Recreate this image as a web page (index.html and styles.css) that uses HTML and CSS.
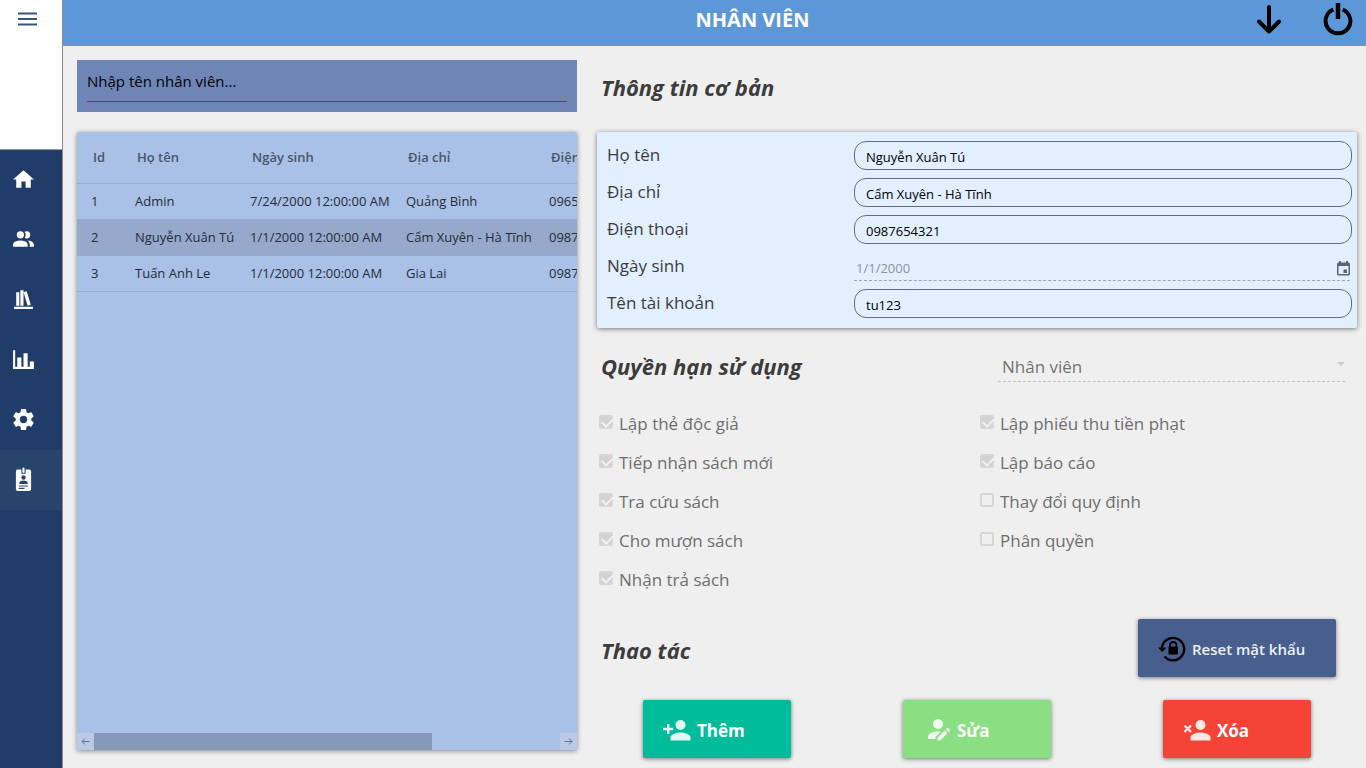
FILE: index.html
```html
<!DOCTYPE html>
<html lang="vi">
<head>
<meta charset="utf-8">
<meta name="viewport" content="width=device-width, initial-scale=1">
<title>Nhân viên</title>
<link rel="stylesheet" href="styles.css">
</head>
<body>
<div class="app">
  <aside class="sidebar">
    <div class="sidebar-top">
      <button class="icon-button menu-button" type="button" aria-label="Menu">
        <svg width="20" height="14" viewBox="0 0 20 14"><path d="M0 1.5h19M0 7h19M0 12.5h19" stroke="currentColor" stroke-width="2"/></svg>
      </button>
    </div>
    <nav class="nav">
      <a class="nav-item" href="#home" aria-label="Trang chủ"><svg class="nav-icon" viewBox="0 0 24 24"><path d="M10 20v-6h4v6h5v-8h3L12 3 2 12h3v8z"/></svg></a>
      <a class="nav-item" href="#readers" aria-label="Độc giả"><svg class="nav-icon" viewBox="0 0 24 24"><path d="M16 17V19H2V17S2 13 9 13 16 17 16 17M12.5 7.5A3.5 3.5 0 1 0 9 11A3.5 3.5 0 0 0 12.5 7.5M15.94 13A5.32 5.32 0 0 1 18 17V19H22V17S22 13.37 15.94 13M15 4A3.39 3.39 0 0 0 13.07 4.59A5 5 0 0 1 13.07 10.41A3.39 3.39 0 0 0 15 11A3.5 3.5 0 0 0 15 4Z"/></svg></a>
      <a class="nav-item" href="#books" aria-label="Sách"><svg class="nav-icon" viewBox="0 0 24 24"><path d="M9 3V18H12V3H9M12 5L16 18L19 17L15 4L12 5M5 5V18H8V5H5M3 19V21H21V19H3Z"/></svg></a>
      <a class="nav-item" href="#reports" aria-label="Báo cáo"><svg class="nav-icon" viewBox="0 0 24 24"><path d="M22,21H2V3H4V19H6V10H10V19H12V6H16V19H18V14H22V21Z"/></svg></a>
      <a class="nav-item" href="#settings" aria-label="Cài đặt"><svg class="nav-icon" viewBox="0 0 24 24"><path d="M12,15.5A3.5,3.5 0 0,1 8.5,12A3.5,3.5 0 0,1 12,8.5A3.5,3.5 0 0,1 15.5,12A3.5,3.5 0 0,1 12,15.5M19.43,12.97C19.47,12.65 19.5,12.33 19.5,12C19.5,11.67 19.47,11.34 19.43,11L21.54,9.37C21.73,9.22 21.78,8.95 21.66,8.73L19.66,5.27C19.54,5.05 19.27,4.96 19.05,5.05L16.56,6.05C16.04,5.66 15.5,5.32 14.87,5.07L14.5,2.42C14.46,2.18 14.25,2 14,2H10C9.75,2 9.54,2.18 9.5,2.42L9.13,5.07C8.5,5.32 7.96,5.66 7.44,6.05L4.95,5.05C4.73,4.96 4.46,5.05 4.34,5.27L2.34,8.73C2.21,8.95 2.27,9.22 2.46,9.37L4.57,11C4.53,11.34 4.5,11.67 4.5,12C4.5,12.33 4.53,12.65 4.57,12.97L2.46,14.63C2.27,14.78 2.21,15.05 2.34,15.27L4.34,18.73C4.46,18.95 4.73,19.03 4.95,18.95L7.44,17.94C7.96,18.34 8.5,18.68 9.13,18.93L9.5,21.58C9.54,21.82 9.75,22 10,22H14C14.25,22 14.46,21.82 14.5,21.58L14.87,18.93C15.5,18.67 16.04,18.34 16.56,17.94L19.05,18.95C19.27,19.03 19.54,18.95 19.66,18.73L21.66,15.27C21.78,15.05 21.73,14.78 21.54,14.63L19.43,12.97Z"/></svg></a>
      <a class="nav-item nav-item-active" href="#staff" aria-label="Nhân viên" aria-current="page"><svg class="nav-icon" viewBox="0 0 24 24"><path fill-rule="evenodd" d="M11 1.500a1 1 0 0 1 2 0V5.500h-2zM6.500 2.500H10v4h4v-4h3.500A1.800 1.800 0 0 1 19.300 4.300V21.200A1.800 1.800 0 0 1 17.500 23H6.500A1.800 1.800 0 0 1 4.700 21.200V4.300A1.800 1.800 0 0 1 6.500 2.500zM12 8a2.100 2.100 0 1 0 0 4.200A2.100 2.100 0 0 0 12 8zM8 16.200h8v-1c0-1.500-2.400-2.200-4-2.200s-4 .7-4 2.200zM7.500 17.800v1h9v-1zM7.500 20v1h5.500v-1z"/></svg></a>
    </nav>
  </aside>

  <div class="page">
    <header class="topbar">
      <h1 class="title">NHÂN VIÊN</h1>
      <div class="topbar-actions">
        <button class="icon-button" type="button" aria-label="Thu nhỏ">
          <svg width="26" height="32" viewBox="0 0 26 32"><path d="M13 4v24M3 18.500l10 10 10-10" fill="none" stroke="#000" stroke-width="4" stroke-linecap="round" stroke-linejoin="round"/></svg>
        </button>
        <button class="icon-button" type="button" aria-label="Thoát">
          <svg width="30" height="34" viewBox="0 0 30 34"><path d="M10.300 7.500A12.400 12.400 0 1 0 19.700 7.500" fill="none" stroke="#000" stroke-width="4"/><path d="M15 1v16" stroke="#000" stroke-width="4.500"/></svg>
        </button>
      </div>
    </header>

    <main class="content">
      <section class="list-panel">
        <div class="search">
          <input class="search-input" type="text" placeholder="Nhập tên nhân viên..." aria-label="Nhập tên nhân viên">
        </div>
        <div class="table-card">
          <div class="table-scroll">
            <table class="staff-table">
              <colgroup><col class="col-id"><col class="col-name"><col class="col-birth"><col class="col-address"><col></colgroup>
              <thead>
                <tr><th>Id</th><th>Họ tên</th><th>Ngày sinh</th><th>Địa chỉ</th><th>Điện thoại</th></tr>
              </thead>
              <tbody>
                <tr><td>1</td><td>Admin</td><td>7/24/2000 12:00:00 AM</td><td>Quảng Bình</td><td>0965</td></tr>
                <tr class="selected"><td>2</td><td>Nguyễn Xuân Tú</td><td>1/1/2000 12:00:00 AM</td><td>Cẩm Xuyên - Hà Tĩnh</td><td>0987654321</td></tr>
                <tr><td>3</td><td>Tuấn Anh Le</td><td>1/1/2000 12:00:00 AM</td><td>Gia Lai</td><td>0987</td></tr>
              </tbody>
            </table>
          </div>
          <div class="scrollbar">
            <button class="scroll-button" type="button" aria-label="Cuộn trái"><svg width="9" height="7" viewBox="0 0 9 7"><path d="M8.500 3.500H1M4 .5l-3 3 3 3" fill="none" stroke="currentColor"/></svg></button>
            <div class="scroll-track"><div class="scroll-thumb"></div></div>
            <button class="scroll-button" type="button" aria-label="Cuộn phải"><svg width="9" height="7" viewBox="0 0 9 7"><path d="M.5 3.500H8M5 .5l3 3-3 3" fill="none" stroke="currentColor"/></svg></button>
          </div>
        </div>
      </section>

      <section class="detail-panel">
        <h2 class="heading heading-first">Thông tin cơ bản</h2>
        <form class="info-card">
          <div class="field"><label class="field-label" for="name">Họ tên</label><input class="field-input" id="name" type="text" value="Nguyễn Xuân Tú"></div>
          <div class="field"><label class="field-label" for="address">Địa chỉ</label><input class="field-input" id="address" type="text" value="Cẩm Xuyên - Hà Tĩnh"></div>
          <div class="field"><label class="field-label" for="phone">Điện thoại</label><input class="field-input" id="phone" type="text" value="0987654321"></div>
          <div class="field"><label class="field-label" for="birth">Ngày sinh</label>
            <div class="date-box">
              <input class="date-input" id="birth" type="text" value="1/1/2000" disabled>
              <button class="icon-button calendar-button" type="button" aria-label="Chọn ngày"><svg width="13" height="15" viewBox="0 0 13 15"><path fill-rule="evenodd" d="M2 0h2v1.500h5V0h2v1.500h.5A1.500 1.500 0 0 1 13 3v10a1.500 1.500 0 0 1-1.500 1.500h-10A1.500 1.500 0 0 1 0 13V3a1.500 1.500 0 0 1 1.500-1.500H2zM1.500 5v8h10V5zM6.500 8.500H10V12H6.500z"/></svg></button>
            </div>
          </div>
          <div class="field"><label class="field-label" for="account">Tên tài khoản</label><input class="field-input" id="account" type="text" value="tu123"></div>
        </form>

        <div class="role-row">
          <h2 class="heading">Quyền hạn sử dụng</h2>
          <div class="role-box">
            <select class="role-select" aria-label="Quyền hạn" disabled><option>Nhân viên</option></select>
            <svg class="role-arrow" width="8" height="4" viewBox="0 0 8 4"><path d="M0 0h8L4 4z"/></svg>
          </div>
        </div>

        <div class="permissions">
          <div class="permission-column">
            <label class="check"><input class="check-box" type="checkbox" checked disabled>Lập thẻ độc giả</label>
            <label class="check"><input class="check-box" type="checkbox" checked disabled>Tiếp nhận sách mới</label>
            <label class="check"><input class="check-box" type="checkbox" checked disabled>Tra cứu sách</label>
            <label class="check"><input class="check-box" type="checkbox" checked disabled>Cho mượn sách</label>
            <label class="check"><input class="check-box" type="checkbox" checked disabled>Nhận trả sách</label>
          </div>
          <div class="permission-column">
            <label class="check"><input class="check-box" type="checkbox" checked disabled>Lập phiếu thu tiền phạt</label>
            <label class="check"><input class="check-box" type="checkbox" checked disabled>Lập báo cáo</label>
            <label class="check"><input class="check-box" type="checkbox" disabled>Thay đổi quy định</label>
            <label class="check"><input class="check-box" type="checkbox" disabled>Phân quyền</label>
          </div>
        </div>

        <div class="action-row">
          <h2 class="heading">Thao tác</h2>
          <button class="button button-reset" type="button">
            <svg width="28" height="26" viewBox="0 0 28 26"><path d="M3.800 12A11.200 11.200 0 1 1 6.500 20.500" fill="none" stroke="#000" stroke-width="2.400"/><path d="M0 11.500h8.500l-4.200 4.700z"/><path d="M12 11V9.200a3.200 3.200 0 0 1 6.400 0V11" fill="none" stroke="#000" stroke-width="1.800"/><rect x="10.500" y="10.500" width="9.500" height="8" rx="1"/></svg>
            Reset mật khẩu
          </button>
        </div>
        <div class="buttons">
          <button class="button button-add" type="button">
            <svg width="28" height="21" viewBox="0 0 28 21"><circle cx="17.500" cy="5" r="5"/><path d="M7.500 20.500V17.500C7.500 14.200 14 12.500 17.500 12.500S27.500 14.200 27.500 17.500V20.500zM4 4h2.400v3.800h3.800v2.400H6.400V14H4v-3.800H0V7.800h4z"/></svg>
            Thêm
          </button>
          <button class="button button-edit" type="button">
            <svg width="24" height="22" viewBox="0 0 24 22"><circle cx="11" cy="5" r="5"/><path d="M13.800 12.700C12.800 12.500 11.800 12.400 11 12.400 7 12.400 1 14.200 1 17.600V20H8.500V18zM10.500 18.800V21.500H13.200L20.500 14.200 17.800 11.500zM18.700 10.600L21.400 13.300 22.900 11.800Q23.400 11.300 22.900 10.800L21.200 9.100Q20.700 8.600 20.200 9.100z"/></svg>
            Sửa
          </button>
          <button class="button button-delete" type="button">
            <svg width="28" height="21" viewBox="0 0 28 21"><circle cx="17.500" cy="5" r="5"/><path d="M7.500 20.500V17.500C7.500 14.200 14 12.500 17.500 12.500S27.500 14.200 27.500 17.500V20.500z"/><path d="M1.500 5.500l6.500 6.500M8 5.500l-6.500 6.500" stroke="currentColor" stroke-width="2.400"/></svg>
            Xóa
          </button>
        </div>
      </section>
    </main>
  </div>
</div>
</body>
</html>
```
FILE: styles.css
```css
* { box-sizing: border-box; }

body {
  margin: 0;
  background: #efefef;
  color: #3c3c3c;
  font-family: "Open Sans", "Noto Sans", sans-serif;
  font-size: 13px;
}

button, input, select { font: inherit; }
h1, h2 { margin: 0; }
svg { display: block; flex: none; fill: currentColor; }

.app { display: flex; min-height: 100vh; }

.icon-button {
  padding: 0;
  border: 0;
  background: none;
  color: inherit;
}

/* Sidebar */
.sidebar {
  flex: none;
  width: 63px;
  border-right: 1px solid #8a8a8a;
  background: #203c68;
}

.sidebar-top {
  display: flex;
  align-items: flex-start;
  height: 150px;
  padding: 12px 18px;
  border-bottom: 1px solid #8d97a8;
  background: #fff;
}

.menu-button { color: #33557f; }

.nav-item {
  display: flex;
  align-items: center;
  height: 60px;
  padding: 0 0 2px 11px;
  color: #fff;
}

.nav-item-active { background: #26446c; }
.nav-icon { width: 25px; height: 25px; }

/* Top bar */
.page {
  display: flex;
  flex: 1;
  flex-direction: column;
  min-width: 0;
}

.topbar {
  display: grid;
  grid-template-columns: 1fr auto 1fr;
  height: 46px;
  padding: 0 13px 6px 89px;
  align-items: center;
  border-bottom: 1px solid #8a8f98;
  background: #5c98d8;
}

.title {
  grid-column: 2;
  color: #fff;
  font-size: 20px;
  font-weight: 700;
  line-height: 28px;
}

.topbar-actions {
  display: flex;
  align-items: center;
  justify-content: flex-end;
  gap: 41px;
  padding-bottom: 2px;
}

/* Content */
.content {
  display: grid;
  flex: 1;
  grid-template-columns: 500fr 760fr;
  gap: 20px;
  padding: 14px 9px 10px 14px;
}

.list-panel {
  display: flex;
  flex-direction: column;
  gap: 20px;
  min-width: 0;
  padding-bottom: 8px;
}

.search {
  height: 52px;
  padding: 5px 10px 10px;
  background: #6f85b5;
}

.search-input {
  width: 100%;
  height: 37px;
  padding: 0 0 4px;
  border: 0;
  border-bottom: 1px solid #e8101c;
  background: none;
  color: #000;
  font-size: 15px;
}

.search-input::placeholder { color: #000; opacity: 1; }

.table-card {
  display: flex;
  flex: 1;
  flex-direction: column;
  overflow: hidden;
  border-radius: 2px;
  background: #a9c0e7;
  box-shadow: 0 1px 5px rgba(0, 0, 0, 0.45);
}

.table-scroll { flex: 1; overflow: hidden; }

.staff-table {
  width: 689px;
  border-collapse: collapse;
  table-layout: fixed;
  text-align: left;
  white-space: nowrap;
}

.col-id { width: 44px; }
.col-name { width: 115px; }
.col-birth { width: 156px; }
.col-address { width: 143px; }

.staff-table th {
  height: 51px;
  padding: 0 0 0 16px;
  border-bottom: 1px solid #96abd0;
  color: #4b5668;
  font-weight: 600;
}

.staff-table td {
  height: 36px;
  padding: 0 0 0 14px;
  border-bottom: 1px solid #96abd0;
  color: #262c36;
}

.selected { background: #96a9cb; }

.scrollbar { display: flex; height: 17px; }

.scroll-button {
  display: grid;
  width: 17px;
  padding: 0;
  place-items: center;
  border: 0;
  background: #b9c9e6;
  color: #66758f;
}

.scroll-track { flex: 1; background: #a9c0e7; }
.scroll-thumb { width: 72.5%; height: 100%; background: #8698b8; }

/* Detail */
.heading {
  font-size: 22px;
  font-style: italic;
  font-weight: 700;
  line-height: 40px;
  padding-left: 4px;
}

.heading-first { margin-bottom: 18px; line-height: 54px; }

.info-card {
  padding: 5px 5px 6px;
  border-radius: 2px;
  background: #e1efff;
  box-shadow: 0 1px 5px rgba(0, 0, 0, 0.5);
}

.field {
  display: grid;
  grid-template-columns: 1fr 2fr;
  align-items: center;
  height: 37px;
}

.field-label { padding: 0 0 2px 5px; font-size: 17px; }

.field-input {
  height: 29px;
  margin-left: 2px;
  padding: 2px 11px 0;
  border: 1px solid #666d77;
  border-radius: 12px;
  background: none;
  color: #000;
}

.date-box {
  display: flex;
  align-items: center;
  height: 29px;
  margin: 0 2px;
  border-bottom: 1px dashed #9aa6b5;
}

.date-input {
  flex: 1;
  min-width: 0;
  padding: 4px 2px 0;
  border: 0;
  background: none;
  color: #8b939e;
}

.calendar-button { padding-top: 4px; color: #5c636c; }

.role-row {
  display: flex;
  justify-content: space-between;
  margin-top: 18px;
}

.role-box {
  display: flex;
  flex: 0 1 347px;
  height: 36px;
  margin-right: 12px;
  align-items: center;
  border-bottom: 1px dashed #c2c2c2;
}

.role-select {
  flex: 1;
  padding: 5px 4px 0;
  border: 0;
  appearance: none;
  background: none;
  color: #737373;
  font-size: 17px;
  opacity: 1;
}

.role-arrow { color: #cdcdcd; }

.permissions {
  display: grid;
  grid-template-columns: 1fr 1fr;
  column-gap: 2px;
  margin-top: 18px;
}

.check {
  display: flex;
  align-items: center;
  gap: 6px;
  height: 39px;
  padding-left: 2px;
  color: #6e6e6e;
  font-size: 17px;
}

.check-box {
  width: 14px;
  height: 14px;
  margin: 0 0 4px;
  border: 2px solid #d6d6d6;
  border-radius: 2px;
  appearance: none;
}

.check-box:checked { background: #d2d2d2; }

.check-box:checked::before {
  display: block;
  width: 9px;
  height: 5px;
  border-bottom: 2px solid #f2f2f2;
  border-left: 2px solid #f2f2f2;
  content: "";
  transform: translate(1px, 1px) rotate(-45deg);
}

.action-row {
  display: flex;
  align-items: center;
  justify-content: space-between;
  margin-top: 20px;
  padding-right: 21px;
}

.action-row .heading { padding-top: 4px; }

.button {
  display: flex;
  align-items: center;
  gap: 6px;
  width: 148px;
  height: 58px;
  padding: 2px 20px 0;
  border: 0;
  border-radius: 2px;
  color: #fff;
  font-size: 17px;
  font-weight: 700;
  white-space: nowrap;
  box-shadow: 0 1px 4px rgba(0, 0, 0, 0.5);
}

.button svg { opacity: 0.88; }

.button-reset {
  width: 198px;
  background: #485f8e;
  color: #eceff5;
  font-size: 15px;
  font-weight: 600;
}

.button-reset svg { color: #000; opacity: 1; }

.buttons {
  display: flex;
  justify-content: space-between;
  margin-top: 23px;
  padding: 0 46px;
}

.button-add { background: #00bc9b; }
.button-edit { padding-left: 24px; background: #8adf83; }
.button-delete { background: #f54337; }
```
